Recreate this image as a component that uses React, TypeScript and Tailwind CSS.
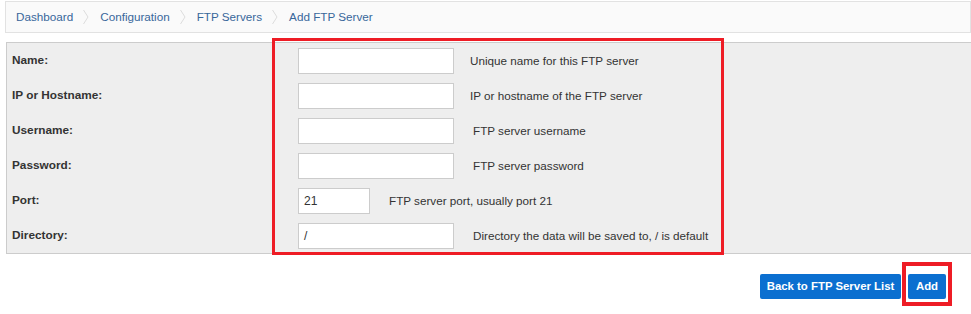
import React from "react";

const rows: { label: string; value: string; help: string; w: string; helpMl: string }[] = [
  { label: "Name:", value: "", help: "Unique name for this FTP server", w: "w-[156px]", helpMl: "ml-[16px]" },
  { label: "IP or Hostname:", value: "", help: "IP or hostname of the FTP server", w: "w-[156px]", helpMl: "ml-[16px]" },
  { label: "Username:", value: "", help: "FTP server username", w: "w-[156px]", helpMl: "ml-[19px]" },
  { label: "Password:", value: "", help: "FTP server password", w: "w-[156px]", helpMl: "ml-[19px]" },
  { label: "Port:", value: "21", help: "FTP server port, usually port 21", w: "w-[72px]", helpMl: "ml-[19px]" },
  { label: "Directory:", value: "/", help: "Directory the data will be saved to, / is default", w: "w-[156px]", helpMl: "ml-[19px]" },
];

function Sep() {
  return (
    <svg width="6" height="16" viewBox="0 0 6 16" className="ml-[10px] mr-[11px]">
      <path d="M0.5 1 L5 8 L0.5 15" fill="none" stroke="#dcdcdc" strokeWidth="1" />
    </svg>
  );
}

export default function App() {
  const crumbs = ["Dashboard", "Configuration", "FTP Servers", "Add FTP Server"];
  return (
    <div className="relative w-[971px] h-[314px] bg-white overflow-hidden text-[12px] text-[#333]" style={{ fontFamily: '"Liberation Sans", Arial, sans-serif' }}>
      <div className="mt-[1px] ml-[5px] h-[32px] border border-[#e2e2e2] bg-[#fafafa] flex items-center pl-[10px] text-[11.7px]">
        {crumbs.map((c, i) => (
          <React.Fragment key={c}>
            {i > 0 && <Sep />}
            <span className="text-[#38679a]">{c}</span>
          </React.Fragment>
        ))}
      </div>
      <div className="mt-[9px] ml-[6px] border border-[#cccccc] border-r-0 bg-[#eeeeee]">
        {rows.map((r) => (
          <div key={r.label} className="h-[35px] flex items-center">
            <div className="w-[291px] pl-[5px] font-bold text-[11.8px]">{r.label}</div>
            <div className={`${r.w} h-[26px] bg-white border border-[#cccccc] flex items-center px-[5px] text-[#333]`}>{r.value}</div>
            <div className={`${r.helpMl} text-[11.7px]`}>{r.help}</div>
          </div>
        ))}
      </div>
      <div className="flex justify-end mt-[20px] mr-[25px] gap-[7px]">
        <button className="h-[25px] w-[141px] rounded-[2px] bg-[#0b6fd0] text-white font-bold text-[11.4px]">Back to FTP Server List</button>
        <button className="h-[25px] w-[38px] rounded-[2px] bg-[#0b6fd0] text-white font-bold text-[11.4px]">Add</button>
      </div>
      <div className="absolute left-[272px] top-[38px] w-[452px] h-[217px] border-[3px] border-[#ee1c25]"></div>
      <div className="absolute left-[902px] top-[262px] w-[50px] h-[44px] border-[4px] border-[#ee1c25]"></div>
    </div>
  );
}
